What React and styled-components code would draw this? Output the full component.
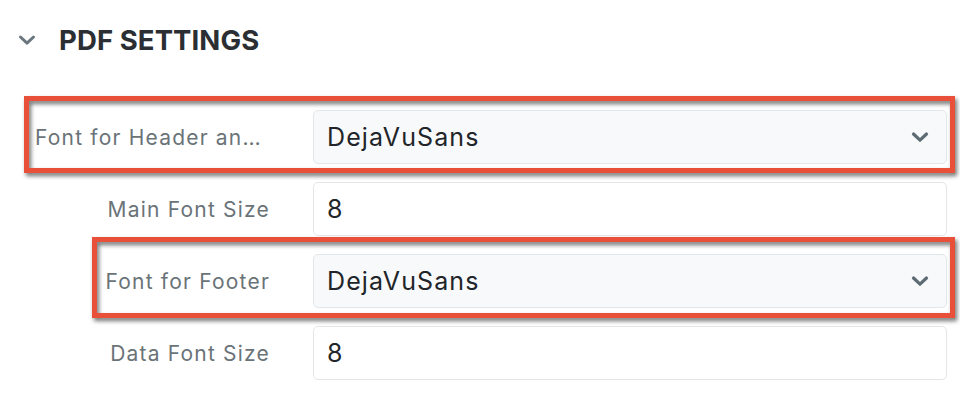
import React from "react";
import styled, { createGlobalStyle } from "styled-components";

const Global = createGlobalStyle`
  html, body { margin: 0; padding: 0; background: #ffffff; }
  body { font-family: Inter, "Noto Sans", sans-serif; }
`;

const Page = styled.div`
  width: 960px;
  height: 408px;
  box-sizing: border-box;
  padding: 22px 13px 0 0;
  overflow: hidden;
`;

const Header = styled.div`
  display: flex;
  align-items: center;
  height: 36px;
  padding-left: 17px;
  gap: 22px;
`;

const Title = styled.h2`
  margin: 0;
  font-size: 27.5px;
  font-weight: 700;
  color: #2b2f33;
  letter-spacing: 0.1px;
`;

const Form = styled.div`
  display: flex;
  flex-direction: column;
  gap: 18px;
  margin-top: 52px;
`;

const Row = styled.div`
  position: relative;
  display: grid;
  grid-template-columns: 235px 1fr;
  column-gap: 43px;
  align-items: center;
  padding-left: 35px;
`;

const Label = styled.div`
  font-size: 21px;
  letter-spacing: 1.2px;
  color: #6a7378;
  white-space: nowrap;
  overflow: hidden;
  text-overflow: ellipsis;
  text-align: ${(p) => (p.$left ? "left" : "right")};
`;

const Field = styled.div`
  height: 54px;
  box-sizing: border-box;
  border: 1.5px solid #e2e6e9;
  border-radius: 5px;
  background: ${(p) => (p.$select ? "#f8f9fa" : "#ffffff")};
  display: flex;
  align-items: center;
  justify-content: space-between;
  padding: 0 16px 0 13px;
  font-size: 25px;
  letter-spacing: 1.1px;
  color: #212529;
`;

const Highlight = styled.div`
  position: absolute;
  left: ${(p) => p.$left}px;
  top: ${(p) => p.$top}px;
  right: -8px;
  bottom: ${(p) => p.$bottom}px;
  border: 5px solid #e8503a;
  pointer-events: none;
  filter: drop-shadow(2px 3px 2px rgba(0, 0, 0, 0.55));
`;

const Chevron = ({ size = 20, color = "#5f6b73", stroke = 3.2 }) => (
  <svg width={size} height={size} viewBox="0 0 20 20" fill="none">
    <path
      d="M3.5 7 L10 13.2 L16.5 7"
      stroke={color}
      strokeWidth={stroke}
      strokeLinecap="round"
      strokeLinejoin="round"
    />
  </svg>
);

const rows = [
  { label: "Font for Header and Title", value: "DejaVuSans", select: true, hl: { left: 24, top: -14, bottom: -9 }, leftLabel: true },
  { label: "Main Font Size", value: "8" },
  { label: "Font for Footer", value: "DejaVuSans", select: true, hl: { left: 92, top: -17, bottom: -10 } },
  { label: "Data Font Size", value: "8" },
];

export default function App() {
  return (
    <>
      <Global />
      <Page>
        <Header>
          <Chevron size={20} color="#6b777e" stroke={3} />
          <Title>PDF SETTINGS</Title>
        </Header>
        <Form>
          {rows.map((r) => (
            <Row key={r.label}>
              <Label $left={r.leftLabel}>{r.label}</Label>
              <Field $select={r.select}>
                <span>{r.value}</span>
                {r.select && <Chevron size={20} />}
              </Field>
              {r.hl && <Highlight $left={r.hl.left} $top={r.hl.top} $bottom={r.hl.bottom} />}
            </Row>
          ))}
        </Form>
      </Page>
    </>
  );
}
